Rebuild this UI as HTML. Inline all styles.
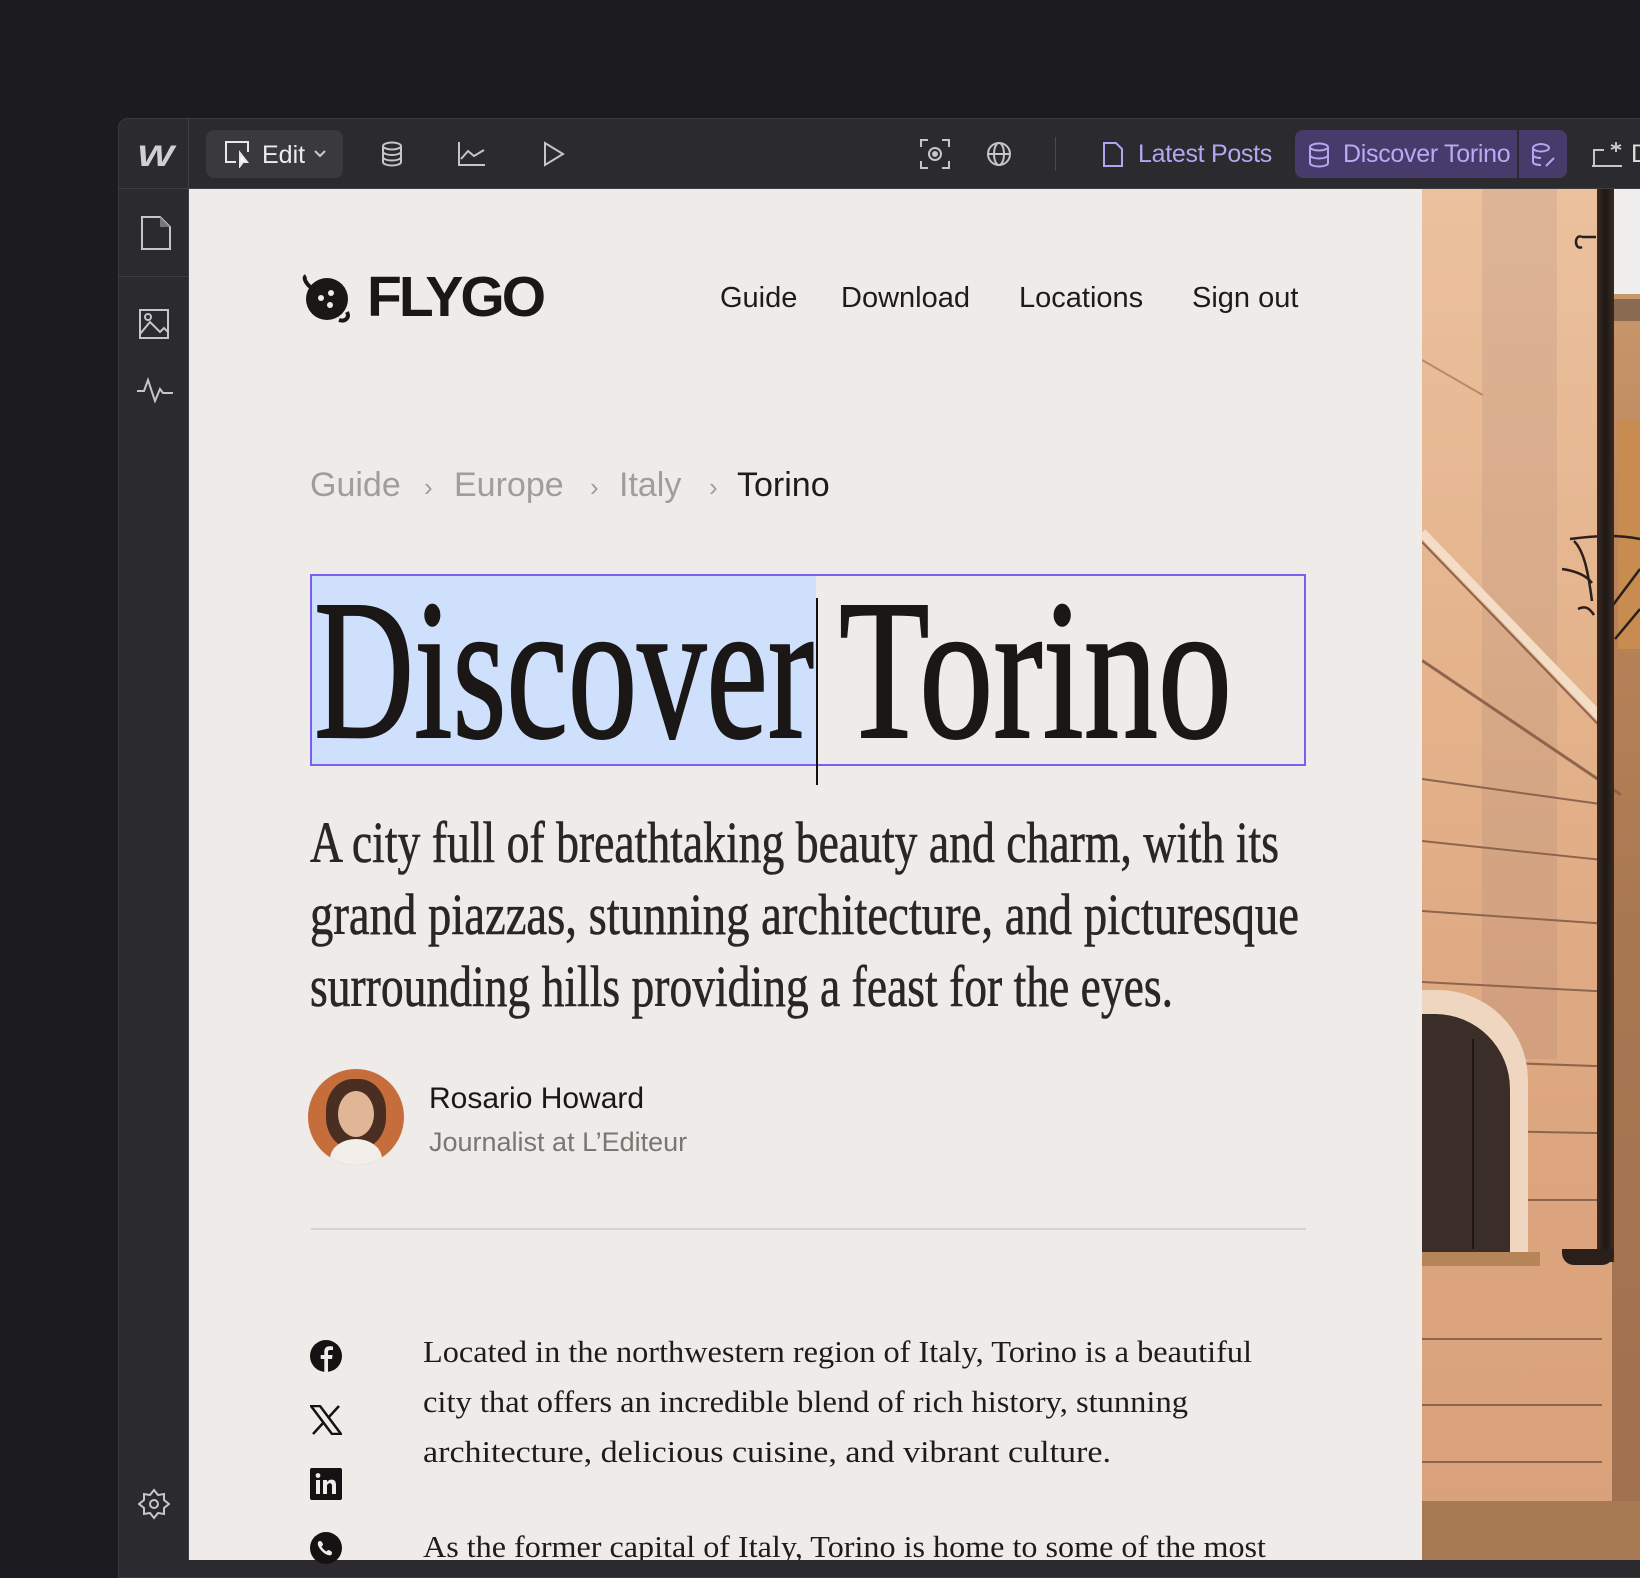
<!DOCTYPE html>
<html><head><meta charset="utf-8"><style>
*{margin:0;padding:0;box-sizing:border-box}
body{width:1640px;height:1560px;background:#1c1b1f;position:relative;overflow:hidden;font-family:"Liberation Sans",sans-serif}
.abs{position:absolute}
#editor{left:118px;top:118px;width:1540px;height:1460px;background:#2b2a2e;border:1px solid #3a393d;border-radius:10px 0 0 0}
#canvas{left:189px;top:189px;width:1233px;height:1371px;background:#eeebe8}
#photo{left:1422px;top:189px;width:218px;height:1371px;overflow:hidden;background:linear-gradient(180deg,#ebc19e 0%,#e4b38c 35%,#dca57e 70%,#d9a27b 100%)}
.nav{font-size:29px;color:#1e1c1b;top:282px}
.bc{font-size:34px;color:#a09d9a;top:466px}
.ln{position:absolute;left:0;width:180px;height:2px;background:#8d644c;transform-origin:left}
</style></head><body>
<div id="editor" class="abs"></div>
<div class="abs" style="left:188px;top:118px;width:1px;height:1442px;background:#3e3d42"></div>
<div class="abs" style="left:118px;top:188px;width:1522px;height:1px;background:#3e3d42"></div>
<div class="abs" style="left:118px;top:276px;width:70px;height:1px;background:#3e3d42"></div>
<div class="abs" style="left:137px;top:140px;font:italic 900 30px 'Liberation Sans';color:#d0cfd3;letter-spacing:-3px;transform:scaleX(1.3);transform-origin:left">W</div>
<div class="abs" style="left:206px;top:130px;width:137px;height:48px;background:#3a393d;border-radius:8px"></div>
<svg class="abs" style="left:224px;top:140px" width="30" height="28" viewBox="0 0 30 28" fill="none" stroke="#e8e7ea" stroke-width="2"><path d="M12 22H2V2h22v10"/><path d="M16 13l0 13 3-4 4 0z" fill="#fff"/></svg>
<div class="abs" style="left:262px;top:141px;font-size:25px;color:#ececee">Edit</div>
<svg class="abs" style="left:313px;top:149px" width="14" height="10" viewBox="0 0 14 10" fill="none" stroke="#ccc" stroke-width="2"><path d="M2 2l5 5 5-5"/></svg>
<svg class="abs" style="left:381px;top:141px" width="22" height="26" viewBox="0 0 22 26" fill="none" stroke="#c6c5c9" stroke-width="2"><ellipse cx="11" cy="5" rx="9" ry="3.5"/><path d="M2 5v16c0 2 4 3.5 9 3.5s9-1.5 9-3.5V5M2 10.5c0 2 4 3.5 9 3.5s9-1.5 9-3.5M2 16c0 2 4 3.5 9 3.5s9-1.5 9-3.5"/></svg>
<svg class="abs" style="left:458px;top:141px" width="28" height="26" viewBox="0 0 28 26" fill="none" stroke="#c6c5c9" stroke-width="2"><path d="M1 1v23h26M3 18l7-8 6 5 10-6"/></svg>
<svg class="abs" style="left:543px;top:141px" width="22" height="26" viewBox="0 0 22 26" fill="none" stroke="#c6c5c9" stroke-width="2"><path d="M2 2v22l18-11z"/></svg>
<svg class="abs" style="left:920px;top:139px" width="30" height="30" viewBox="0 0 30 30" fill="none" stroke="#c6c5c9" stroke-width="2"><path d="M1 8V1h7M22 1h7v7M29 22v7h-7M8 29H1v-7"/><circle cx="15" cy="15" r="6"/><circle cx="15" cy="15" r="2" fill="#c6c5c9"/></svg>
<svg class="abs" style="left:986px;top:141px" width="26" height="26" viewBox="0 0 26 26" fill="none" stroke="#c6c5c9" stroke-width="2"><circle cx="13" cy="13" r="11"/><ellipse cx="13" cy="13" rx="5" ry="11"/><path d="M2 13h22"/></svg>
<div class="abs" style="left:1055px;top:137px;width:1px;height:34px;background:#4a494d"></div>
<svg class="abs" style="left:1102px;top:141px" width="22" height="27" viewBox="0 0 22 27" fill="none" stroke="#b2a4f0" stroke-width="2"><path d="M2 2h12l6 6v17H2z"/></svg>
<div class="abs" style="left:1138px;top:140px;font-size:25px;color:#b4a6f2;letter-spacing:-0.3px">Latest Posts</div>
<div class="abs" style="left:1295px;top:130px;width:272px;height:48px;background:#463b6a;border-radius:8px"></div>
<div class="abs" style="left:1517px;top:130px;width:2px;height:48px;background:#2b2a2e"></div>
<svg class="abs" style="left:1308px;top:142px" width="22" height="26" viewBox="0 0 22 26" fill="none" stroke="#b4a6f2" stroke-width="2"><ellipse cx="11" cy="5" rx="9" ry="3.5"/><path d="M2 5v16c0 2 4 3.5 9 3.5s9-1.5 9-3.5V5M2 13c0 2 4 3.5 9 3.5s9-1.5 9-3.5"/></svg>
<div class="abs" style="left:1343px;top:140px;font-size:25px;color:#b8aaf4;letter-spacing:-0.3px">Discover Torino</div>
<svg class="abs" style="left:1531px;top:142px" width="26" height="26" viewBox="0 0 26 26" fill="none" stroke="#b4a6f2" stroke-width="2"><path d="M18 6c0-2-4-4-8-4S2 4 2 6v14c0 2 4 3 8 3M2 13c0 2 4 3 8 3M2 6c0 2 4 3.5 8 3.5s8-1.5 8-3.5M15 24l8-8"/></svg>
<svg class="abs" style="left:1590px;top:140px" width="36" height="28" viewBox="0 0 36 28" fill="none" stroke="#c6c5c9" stroke-width="2"><path d="M2 26h30M4 26V10h10M26 2v10M21 5l10 4M21 9l10-4"/></svg>
<div class="abs" style="left:1631px;top:140px;font-size:25px;color:#ddd">D</div>
<svg class="abs" style="left:140px;top:215px" width="32" height="36" viewBox="0 0 32 36" fill="none" stroke="#c6c5c9" stroke-width="2"><path d="M2 2h18l10 10v22H2z"/><path d="M20 2v10h10" fill="#777" stroke="none"/></svg>
<svg class="abs" style="left:132px;top:300px" width="42" height="40" viewBox="0 0 42 40" fill="none" stroke="#c6c5c9" stroke-width="2"><path d="M8 10h28v28H8zM8 34l10-12 10 10 4-4 4 4"/><circle cx="16" cy="17" r="3"/></svg>
<svg class="abs" style="left:136px;top:377px" width="38" height="26" viewBox="0 0 38 26" fill="none" stroke="#c6c5c9" stroke-width="2"><path d="M1 14h7l4-11 7 21 5-12 3 4h10"/></svg>
<svg class="abs" style="left:138px;top:1488px" width="32" height="32" viewBox="0 0 32 32" fill="none" stroke="#c6c5c9" stroke-width="2"><path d="M16 2l4 5 6-1 0 6 5 4-5 4 0 6-6-1-4 5-4-5-6 1 0-6-5-4 5-4 0-6 6 1z"/><circle cx="16" cy="16" r="4"/></svg>

<div id="canvas" class="abs"></div>
<svg class="abs" style="left:300px;top:270px" width="55" height="56" viewBox="0 0 55 56"><circle cx="27" cy="29" r="21" fill="#1a1716"/><path d="M6 6c-4 2 2 10 6 12M47 42c3 6-2 10-8 8" stroke="#1a1716" stroke-width="4" fill="none"/><circle cx="21" cy="28" r="3" fill="#eeebe8"/><circle cx="31" cy="23" r="3" fill="#eeebe8"/><circle cx="30" cy="35" r="3" fill="#eeebe8"/></svg>
<div class="abs" style="left:367px;top:264px;font:900 57px 'Liberation Sans';color:#1a1716;letter-spacing:-3px">FLYGO</div>
<div class="abs nav" style="left:720px">Guide</div>
<div class="abs nav" style="left:841px">Download</div>
<div class="abs nav" style="left:1019px">Locations</div>
<div class="abs nav" style="left:1192px">Sign out</div>
<div class="abs bc" style="left:310px">Guide</div>
<div class="abs bc" style="left:424px;font-size:26px;top:472px">›</div>
<div class="abs bc" style="left:454px">Europe</div>
<div class="abs bc" style="left:590px;font-size:26px;top:472px">›</div>
<div class="abs bc" style="left:619px">Italy</div>
<div class="abs bc" style="left:709px;font-size:26px;top:472px">›</div>
<div class="abs bc" style="left:737px;color:#1e1c1b">Torino</div>
<div class="abs" style="left:311px;top:575px;width:505px;height:190px;background:#cfe0fd"></div>
<div class="abs" style="left:310px;top:574px;width:996px;height:192px;border:2px solid #7b5ff0"></div>
<svg class="abs" style="left:0;top:0" width="1640" height="1560">
<g font-family="Liberation Serif,serif" fill="#1a1716">
<text x="314" y="737" font-size="200" textLength="500" lengthAdjust="spacingAndGlyphs" stroke="#1a1716" stroke-width="2">Discover</text>
<text x="839" y="737" font-size="200" textLength="393" lengthAdjust="spacingAndGlyphs" stroke="#1a1716" stroke-width="2">Torino</text>
<g font-size="58" fill="#2a2624" stroke="#2a2624" stroke-width="0.6">
<text x="310" y="862" textLength="969" lengthAdjust="spacingAndGlyphs">A city full of breathtaking beauty and charm, with its</text>
<text x="310" y="934" textLength="989" lengthAdjust="spacingAndGlyphs">grand piazzas, stunning architecture, and picturesque</text>
<text x="310" y="1006" textLength="863" lengthAdjust="spacingAndGlyphs">surrounding hills providing a feast for the eyes.</text>
</g>
<g font-size="31" fill="#1e1b1a">
<text x="423" y="1362" textLength="829" lengthAdjust="spacingAndGlyphs">Located in the northwestern region of Italy, Torino is a beautiful</text>
<text x="423" y="1412" textLength="765" lengthAdjust="spacingAndGlyphs">city that offers an incredible blend of rich history, stunning</text>
<text x="423" y="1462" textLength="688" lengthAdjust="spacingAndGlyphs">architecture, delicious cuisine, and vibrant culture.</text>
<text x="423" y="1557" textLength="843" lengthAdjust="spacingAndGlyphs">As the former capital of Italy, Torino is home to some of the most</text>
</g>
</g>
</svg>
<div class="abs" style="left:816px;top:598px;width:2px;height:187px;background:#111"></div>
<div class="abs" style="left:308px;top:1069px;width:96px;height:96px;border-radius:50%;overflow:hidden;background:#c66d3c">
  <div class="abs" style="left:18px;top:10px;width:60px;height:70px;border-radius:45%;background:#4a2e22"></div>
  <div class="abs" style="left:30px;top:22px;width:36px;height:46px;border-radius:50%;background:#e0b696"></div>
  <div class="abs" style="left:22px;top:70px;width:52px;height:40px;border-radius:50% 50% 0 0;background:#f2eeea"></div>
</div>
<div class="abs" style="left:429px;top:1082px;font-size:30px;color:#1a1716">Rosario Howard</div>
<div class="abs" style="left:429px;top:1127px;font-size:27px;color:#7a7673">Journalist at L’Editeur</div>
<div class="abs" style="left:311px;top:1228px;width:995px;height:2px;background:#d6d2ce"></div>
<svg class="abs" style="left:310px;top:1340px" width="32" height="32" viewBox="0 0 32 32"><circle cx="16" cy="16" r="16" fill="#141212"/><path d="M18 32V19h4l.6-4H18v-3c0-1.2.5-2 2-2h3V6.5c-1-.2-2-.3-3.5-.3-3.3 0-5.2 2-5.2 5.4V15h-3.6v4h3.6v13z" fill="#eeebe8"/></svg>
<svg class="abs" style="left:310px;top:1405px" width="32" height="30" viewBox="0 0 32 30"><path d="M1 1h9l21 28h-9z" fill="none" stroke="#141212" stroke-width="2.5"/><path d="M29 1L18 13M3 29l11-12" stroke="#141212" stroke-width="2.5"/></svg>
<svg class="abs" style="left:310px;top:1468px" width="32" height="32" viewBox="0 0 32 32"><rect width="32" height="32" rx="2" fill="#141212"/><rect x="6" y="12" width="4" height="14" fill="#eeebe8"/><circle cx="8" cy="7.5" r="2.4" fill="#eeebe8"/><path d="M13 12h4v2c1-1.6 2.6-2.4 4.6-2.4 3.4 0 4.4 2.2 4.4 5.4V26h-4v-8c0-1.8-.6-2.8-2.2-2.8S17 16.4 17 18v8h-4z" fill="#eeebe8"/></svg>
<svg class="abs" style="left:310px;top:1532px" width="32" height="32" viewBox="0 0 32 32"><circle cx="16" cy="16" r="16" fill="#141212"/><path d="M10 9c2 0 3 3 3 4l-1.5 1.5c1 2 3 4 5 5L18 18c1 0 4 1 4 3s-2 3-4 2c-4-1-9-6-10-10-.5-2 0-4 2-4z" fill="#eeebe8"/></svg>
<!-- photo -->
<div id="photo" class="abs">
  <div class="abs" style="left:190px;top:0;width:28px;height:105px;background:#f0eeec"></div>
  <div class="abs" style="left:190px;top:105px;width:28px;height:1266px;background:linear-gradient(180deg,#c8966a 0%,#b88258 25%,#a87852 50%,#a07050 100%)"></div>
  <div class="abs" style="left:192px;top:110px;width:26px;height:22px;background:#8a6a50"></div>
  <div class="abs" style="left:196px;top:230px;width:22px;height:230px;background:#c88c50"></div>
  <div class="abs" style="left:60px;top:0;width:75px;height:870px;background:rgba(150,120,110,.16)"></div>
  <div class="ln" style="top:170px;width:70px;transform:rotate(30deg);background:#b88a6a"></div>
  <div class="abs" style="left:0;top:339px;width:260px;height:9px;background:#f4ddc6;transform:rotate(46deg);transform-origin:left"></div>
  <div class="ln" style="top:352px;width:260px;transform:rotate(46deg)"></div>
  <div class="ln" style="top:470px;width:240px;transform:rotate(34deg);height:3px"></div>
  <div class="ln" style="top:589px;transform:rotate(8deg)"></div>
  <div class="ln" style="top:651px;transform:rotate(6deg)"></div>
  <div class="ln" style="top:721px;transform:rotate(4deg)"></div>
  <div class="ln" style="top:792px;transform:rotate(3deg)"></div>
  <div class="ln" style="top:870px;transform:rotate(2deg)"></div>
  <div class="ln" style="top:940px;transform:rotate(1deg)"></div>
  <div class="ln" style="top:1010px"></div>
  <div class="ln" style="top:1149px"></div>
  <div class="ln" style="top:1215px"></div>
  <div class="ln" style="top:1272px"></div>
  <svg class="abs" style="left:100px;top:0" width="118" height="600"><g stroke="#2a1f1a" stroke-width="2.5" fill="none"><path d="M60 48c-8-4-8 14 0 10M60 48h14"/><path d="M48 350c30-4 50-4 70 0M52 352c10 10 14 30 18 60M40 380c14 2 24 6 30 14M56 420c8-4 12 0 16 6"/><path d="M118 380l-30 40M118 420l-25 30"/></g></svg>
  <div class="abs" style="left:0;top:801px;width:106px;height:272px;background:#eed6c0;border-radius:0 90px 0 0"></div>
  <div class="abs" style="left:0;top:825px;width:88px;height:240px;background:#3b2d27;border-radius:0 75px 0 0"></div>
  <div class="abs" style="left:50px;top:850px;width:2px;height:210px;background:#1e1714"></div>
  <div class="abs" style="left:0;top:1063px;width:118px;height:14px;background:#b58558"></div>
  <div class="abs" style="left:175px;top:0;width:17px;height:1073px;background:linear-gradient(90deg,#3a2a22,#1e1714,#3a2a22)"></div>
  <div class="abs" style="left:140px;top:1060px;width:52px;height:16px;border-radius:0 0 12px 12px;background:#2a1f1a"></div>
  <div class="abs" style="left:0;top:1312px;width:218px;height:59px;background:#a87a54"></div>
</div>
</body></html>
